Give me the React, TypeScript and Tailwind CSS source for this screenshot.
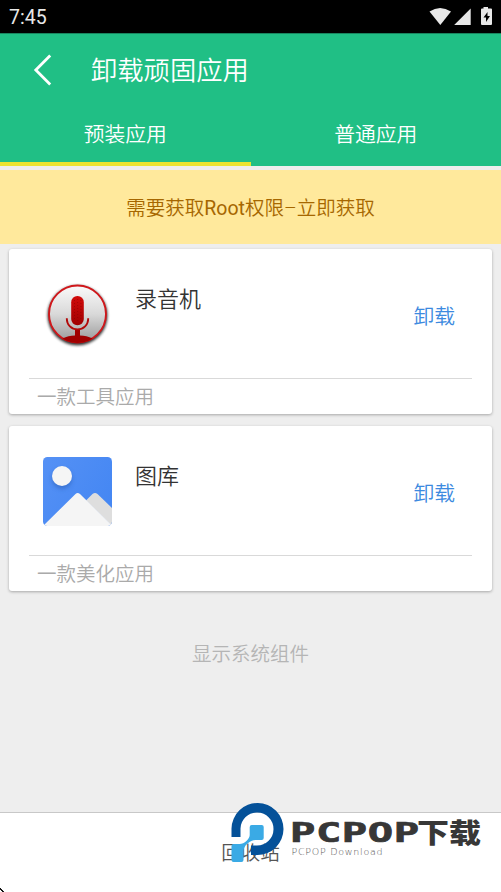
import { FC, ReactNode } from "react";

type AppItem = {
  name: string;
  description: string;
  icon: ReactNode;
};

const RecorderIcon: FC = () => (
  <svg width="72" height="72" viewBox="0 0 72 72">
    <defs>
      <linearGradient id="dial" x1="0" y1="0" x2="0" y2="1">
        <stop offset="0" stopColor="#fafafa" />
        <stop offset="0.5" stopColor="#d9d9d9" />
        <stop offset="1" stopColor="#989898" />
      </linearGradient>
      <linearGradient id="mic" x1="0" y1="0" x2="0" y2="1">
        <stop offset="0" stopColor="#d20a0a" />
        <stop offset="1" stopColor="#a00000" />
      </linearGradient>
      <filter id="dialShadow" x="-20%" y="-20%" width="140%" height="140%">
        <feGaussianBlur stdDeviation="1.5" />
      </filter>
      <clipPath id="dialClip">
        <circle cx="35.5" cy="35" r="29" />
      </clipPath>
    </defs>
    <circle cx="35.5" cy="36.500" r="29.8" fill="#000" opacity="0.85" filter="url(#dialShadow)" />
    <circle cx="35.5" cy="35" r="28.5" fill="url(#dial)" stroke="#d0171b" strokeWidth="1.9" />
    <g clipPath="url(#dialClip)">
      <path d="M20.500 59.500c4-2 8-2.700 12.500-3V50h5v6.500c4.500 .3 8.500 1 12.500 3V66h-30z" fill="#a00000" />
    </g>
    <path
      d="M24.800 39.200c0 7 4.700 11.200 10.700 11.200S46.200 46.200 46.200 39.200"
      fill="none"
      stroke="#b30808"
      strokeWidth="1.9"
    />
    <rect x="29.200" y="17" width="12.600" height="29.300" rx="6.200" fill="url(#mic)" />
    <path
      d="M32.500 21v21M35.700 20v23M38.900 21v21"
      stroke="#7d0000"
      strokeWidth="0.8"
      strokeDasharray="1 2"
      opacity="0.6"
    />
  </svg>
);

const GalleryIcon: FC = () => (
  <svg width="72" height="72" viewBox="0 0 72 72">
    <defs>
      <linearGradient id="sky" x1="0" y1="0" x2="1" y2="0.6">
        <stop offset="0" stopColor="#5591f5" />
        <stop offset="1" stopColor="#4587f3" />
      </linearGradient>
      <clipPath id="frame">
        <rect x="1" y="1" width="69" height="69" rx="4.500" />
      </clipPath>
      <filter id="sunShadow" x="-30%" y="-30%" width="160%" height="160%">
        <feGaussianBlur stdDeviation="2" />
      </filter>
    </defs>
    <g clipPath="url(#frame)">
      <rect x="1" y="1" width="69" height="69" fill="url(#sky)" />
      <circle cx="20" cy="23" r="10" fill="#2659ad" opacity="0.5" filter="url(#sunShadow)" />
      <circle cx="20" cy="20" r="10" fill="#f5f5f5" />
      <path d="M44 44.500l6.500-6.500q2.500-2 5 0L71 53v18z" fill="#dedede" />
      <path d="M1 70l32.500-32q2-2 4.500 0L70 69.500V71H1z" fill="#f5f5f5" />
    </g>
  </svg>
);

const apps: AppItem[] = [
  { name: "录音机", description: "一款工具应用", icon: <RecorderIcon /> },
  { name: "图库", description: "一款美化应用", icon: <GalleryIcon /> },
];

const StatusBar: FC = () => (
  <div className="flex h-[33px] shrink-0 items-center justify-between bg-black pl-[9px]">
    <span className="pt-0.5 text-[19.500px] leading-none text-[#e8e8e8]">7:45</span>
    <svg width="72" height="33" viewBox="0 0 72 33" fill="#e8e8e8">
      <path d="M.5 11.500Q11 4.500 22 11.500L11.300 25z" />
      <path d="M25.200 25L41.700 8.500V25z" />
      <path d="M54.500 7h4.500v1.500H62q1 0 1 1V24q0 1-1 1H53q-1 0-1-1V9.500q0-1 1-1h1.500z" />
      <path d="M58.500 12l-4 5.500h2.500V22l4-6h-2.500z" fill="#000" />
    </svg>
  </div>
);

const Header: FC = () => (
  <header className="flex h-[133px] shrink-0 flex-col border-t border-[#19855f] bg-[#20bf85] text-white">
    <div className="flex h-[72px] items-center pl-[33px]">
      <svg width="20" height="34" viewBox="0 0 20 34" fill="none" stroke="#fff" strokeWidth="2.800">
        <path d="M17.200 2.500L2.800 17L17.200 31.500" />
      </svg>
      <h1 className="pt-[3px] pl-[38px] text-[26.300px] leading-none font-[350]">卸载顽固应用</h1>
    </div>
    <div className="grid flex-1 grid-cols-2 text-center text-[20.800px] leading-[58px] font-[350]">
      <div className="h-[60px] border-b-4 border-[#ebe331]">预装应用</div>
      <div>普通应用</div>
    </div>
  </header>
);

const AppCard: FC<{ app: AppItem }> = ({ app }) => (
  <div className="flex h-[165px] flex-col rounded-[3px] bg-white px-5 shadow-[0_1px_3px_rgba(0,0,0,0.3)]">
    <div className="flex h-[130px] shrink-0 border-b border-[#d9d9d9]">
      <div className="pt-[30px] pl-[13px]">{app.icon}</div>
      <div className="flex-1 pt-10 pl-[21px] text-[22px] leading-[22px] font-[350] text-[#333]">
        {app.name}
      </div>
      <button className="pt-[9px] pr-[17px] text-[20.800px] font-[350] text-[#3d8ae0]">卸载</button>
    </div>
    <p className="pt-px pl-2 text-[19.500px] leading-[35px] font-[350] text-[#aaa]">{app.description}</p>
  </div>
);

const Watermark: FC = () => (
  <svg className="absolute top-0 left-[222px]" width="279" height="92" viewBox="222 800 279 92">
    <path
      d="M231.500 837v-8.500a26 26 0 1 1 26 26.500H251v-9.500h6a16.500 16.500 0 1 0-16.500-17V837z"
      fill="#045199"
    />
    <path
      d="M249.700 825h12q2 0 2 2v11q0 2-2 2h-6c-6 0-12.200 6-12.200 11v9q0 2-2 2h-8q-2 0-2-2v-14q0-2 2-2h6c5 0 10.200-5 10.200-9v-8q0-2 2-2z"
      fill="#3aaae5"
    />
    <g transform="translate(290 842) scale(1.620 1)">
      <text
        x="0 16 32 48 64"
        y="0"
        fontFamily="DejaVu Sans Mono"
        fontWeight="700"
        fontSize="26"
        fill="#373737"
        stroke="#373737"
        strokeWidth="0.7"
      >
        PCPOP
      </text>
    </g>
    <text
      x="417"
      y="843"
      textLength="64"
      lengthAdjust="spacingAndGlyphs"
      fontFamily="Noto Sans CJK SC"
      fontWeight="900"
      fontSize="27"
      fill="#373737"
    >
      下载
    </text>
    <text x="291.500" y="855" textLength="91" fontFamily="DejaVu Sans" fontSize="9.500" fill="#555">
      PCPOP Download
    </text>
  </svg>
);

export default function App() {
  return (
    <div className="flex h-[892px] w-[501px] flex-col overflow-hidden bg-[#eee] font-[Roboto,'Noto_Sans_CJK_SC',sans-serif]">
      <StatusBar />
      <Header />
      <div className="mt-1 h-[74px] shrink-0 bg-[#ffe99c] text-center text-[19.500px] leading-[77px] font-[350] text-[#a66700]">
        需要获取<span className="font-normal">Root</span>权限–立即获取
      </div>
      <main className="flex flex-1 flex-col gap-3 px-[9px] pt-[5px]">
        {apps.map((app) => (
          <AppCard key={app.name} app={app} />
        ))}
        <p className="pt-[37px] text-center text-[19.500px] leading-[30px] font-[350] text-[#b5b5b5]">
          显示系统组件
        </p>
      </main>
      <footer className="relative h-20 shrink-0 border-t border-[#c8c8c8] bg-white text-center text-[19.500px] leading-[81px] font-[350] text-[#555]">
        回收站
        <div className="absolute -top-[13px] left-0">
          <Watermark />
        </div>
        <svg className="absolute bottom-0 left-0" width="4" height="4" viewBox="0 0 4 4">
          <path d="M0 0h1v1h1v1h1v1h1v1H2V3H1V2H0z" fill="#111" />
        </svg>
      </footer>
    </div>
  );
}
